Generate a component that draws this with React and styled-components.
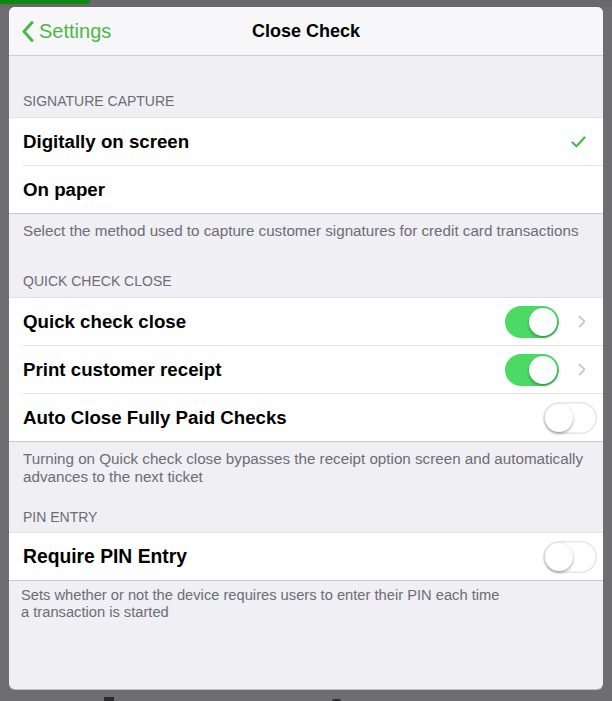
import styled, { createGlobalStyle } from "styled-components";

const GlobalStyle = createGlobalStyle`
  html, body {
    margin: 0;
    padding: 0;
    background: #6d6d72;
  }
  body {
    font-family: "Liberation Sans", Arial, sans-serif;
    -webkit-font-smoothing: antialiased;
  }
`;

const GREEN = "#4cb848";

const Check = () => (
  <svg width="15" height="12" viewBox="0 0 15 12">
    <path d="M1.5 6.5 L5.5 10.2 L13.5 1.5" fill="none" stroke={GREEN} strokeWidth="2.2" strokeLinecap="round" strokeLinejoin="round" />
  </svg>
);

const Chevron = () => (
  <svg width="8" height="13" viewBox="0 0 8 13">
    <path d="M1.5 1.5 L6.5 6.5 L1.5 11.5" fill="none" stroke="#c7c7cc" strokeWidth="1.8" strokeLinecap="round" strokeLinejoin="round" />
  </svg>
);

const BackChevron = () => (
  <svg width="12" height="21" viewBox="0 0 12 21">
    <path d="M10 1.5 L2 10.5 L10 19.5" fill="none" stroke={GREEN} strokeWidth="3" strokeLinecap="round" strokeLinejoin="round" />
  </svg>
);

const Toggle = ({ on }) => (
  <Switch $on={on}>
    <Knob $on={on} />
  </Switch>
);

const App = () => {
  return (
    <Screen>
      <GlobalStyle />
      <TopStrip>
        <GreenTab />
      </TopStrip>

      <Sheet>
        <NavBar>
          <BackButton>
            <BackChevron />
            Settings
          </BackButton>
          <Title>Close Check</Title>
          <span />
        </NavBar>

        <SectionHeader $top={37}>Signature Capture</SectionHeader>
        <Group>
          <Row $right={17}>
            <Label>Digitally on screen</Label>
            <Check />
          </Row>
          <Row $right={17}>
            <Label>On paper</Label>
          </Row>
        </Group>
        <Footer>Select the method used to capture customer signatures for credit card transactions</Footer>

        <SectionHeader $top={33}>Quick Check Close</SectionHeader>
        <Group>
          <Row $right={17}>
            <Label>Quick check close</Label>
            <Accessory>
              <Toggle on />
              <Chevron />
            </Accessory>
          </Row>
          <Row $right={17}>
            <Label>Print customer receipt</Label>
            <Accessory>
              <Toggle on />
              <Chevron />
            </Accessory>
          </Row>
          <Row $right={6}>
            <Label>Auto Close Fully Paid Checks</Label>
            <Toggle />
          </Row>
        </Group>
        <Footer>
          Turning on Quick check close bypasses the receipt option screen and automatically
          <br />
          advances to the next ticket
        </Footer>

        <SectionHeader $top={23} $bottom={7}>PIN Entry</SectionHeader>
        <Group>
          <Row $right={6}>
            <Label $size={19.3}>Require PIN Entry</Label>
            <Toggle />
          </Row>
        </Group>
        <Footer $top={6} $left={12} $line={17} $size={14.7}>
          Sets whether or not the device requires users to enter their PIN each time
          <br />
          a transaction is started
        </Footer>
      </Sheet>

      <BottomStrip>
        <DockMark $left={104} $w={10} />
        <DockMark $left={218} $w={9} $round />
      </BottomStrip>
    </Screen>
  );
};

const Screen = styled.div`
  width: 612px;
  height: 701px;
  overflow: hidden;
  display: flex;
  flex-direction: column;
  background: #6d6d72;
`;

const TopStrip = styled.div`
  height: 7px;
  flex: none;
  display: flex;
  background: #69696d;
`;

const GreenTab = styled.div`
  width: 90px;
  height: 4px;
  background: #0a8a0e;
  border-bottom-right-radius: 4px;
`;

const Sheet = styled.div`
  margin: 0 9px;
  height: 682px;
  flex: none;
  border-radius: 6px;
  overflow: hidden;
  background: #efeff4;
  display: flex;
  flex-direction: column;
  box-shadow: 0 1px 0 #bdbdc2;
`;

const NavBar = styled.div`
  height: 48px;
  flex: none;
  display: grid;
  grid-template-columns: 1fr auto 1fr;
  align-items: center;
  padding: 0 13px;
  background: #f7f7f9;
  border-bottom: 1px solid #cfced3;
`;

const BackButton = styled.div`
  display: flex;
  align-items: center;
  gap: 5px;
  color: ${GREEN};
  font-size: 20px;
`;

const Title = styled.div`
  font-size: 18px;
  font-weight: bold;
  color: #000;
`;

const SectionHeader = styled.div`
  padding: ${(p) => p.$top}px 14px ${(p) => p.$bottom ?? 8}px;
  font-size: 14px;
  line-height: 16px;
  color: #6d6d72;
  text-transform: uppercase;
`;

const Group = styled.div`
  background: #fff;
  border-top: 1px solid #e2e2e6;
  border-bottom: 1px solid #c8c7cc;
`;

const Row = styled.div`
  height: 47px;
  margin-left: 14px;
  padding-right: ${(p) => p.$right}px;
  display: flex;
  align-items: center;
  justify-content: space-between;

  & + & {
    border-top: 1px solid #e4e4e8;
  }
`;

const Label = styled.div`
  font-size: ${(p) => p.$size ?? 18.7}px;
  font-weight: bold;
  color: #000;
`;

const Accessory = styled.div`
  display: flex;
  align-items: center;
  gap: 19px;
`;

const Switch = styled.div`
  position: relative;
  width: 54px;
  height: 32px;
  flex: none;
  border-radius: 16px;
  background: ${(p) => (p.$on ? "#4cd964" : "#fff")};
  box-shadow: ${(p) => (p.$on ? "none" : "inset 0 0 0 1.5px #e5e5ea")};
`;

const Knob = styled.div`
  position: absolute;
  top: 2px;
  left: ${(p) => (p.$on ? 24 : 2)}px;
  width: 28px;
  height: 28px;
  border-radius: 50%;
  background: #fff;
  box-shadow: 0 2px 3px rgba(0, 0, 0, 0.28), 0 0 0 0.5px rgba(0, 0, 0, 0.08);
`;

const Footer = styled.div`
  padding: ${(p) => p.$top ?? 8}px 10px 0 ${(p) => p.$left ?? 14}px;
  font-size: ${(p) => p.$size ?? 15.2}px;
  line-height: ${(p) => p.$line ?? 18}px;
  color: #6d6d72;
  white-space: nowrap;
`;

const BottomStrip = styled.div`
  flex: 1;
  display: flex;
  align-items: flex-end;
`;

const DockMark = styled.div`
  margin-left: ${(p) => p.$left}px;
  width: ${(p) => p.$w}px;
  height: ${(p) => (p.$round ? 2 : 4)}px;
  background: #2b2b2e;
  border-radius: ${(p) => (p.$round ? "4px 4px 0 0" : "0")};
`;

export default App;
